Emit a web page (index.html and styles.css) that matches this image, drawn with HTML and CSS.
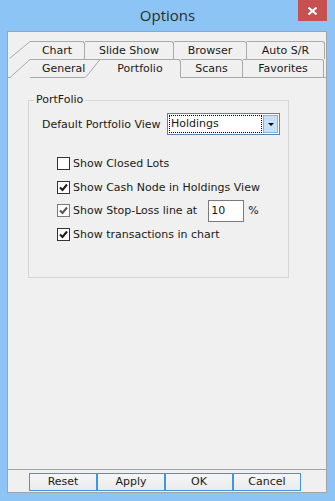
FILE: index.html
```html
<!DOCTYPE html>
<html lang="en">
<head>
  <meta charset="UTF-8">
  <title>Options</title>
  <link rel="stylesheet" href="styles.css">
</head>
<body>
<div class="frame">
  <div class="titlebar">
    <div class="title">Options</div>
    <div class="close">
      <svg width="9" height="8" viewBox="0 0 9 8"><path d="M0.5 0.5 L8.5 7.5 M8.5 0.5 L0.5 7.5" stroke="#fff" stroke-width="2" fill="none"/></svg>
    </div>
  </div>

  <div class="client">
    <!-- two rows of tabs -->
    <div class="tabstrip">
      <div class="tabrow upper">
        <svg class="slant" width="21" height="18"><path d="M0.5 17.5 L21 0.5" stroke="#a9a9a9" fill="none"/></svg>
        <div class="tab tab-chart">Chart</div>
        <div class="tab tab-slides">Slide Show</div>
        <div class="tab tab-browser">Browser</div>
        <div class="tab tab-autosr">Auto S/R</div>
      </div>
      <div class="tabrow lower">
        <svg class="slant" width="22" height="19"><path d="M0 18.5 H2.5 M2 18.5 L22 0.5" stroke="#a9a9a9" fill="none"/></svg>
        <div class="tab tab-general">General</div>
        <svg class="slant" width="15" height="19"><path d="M0 0.5 H15 M0.5 18.5 L15 0.5" stroke="#a9a9a9" fill="none"/></svg>
        <div class="tab tab-portfolio active">Portfolio</div>
        <div class="tab tab-scans">Scans</div>
        <div class="tab tab-favorites">Favorites</div>
        <div class="tab-fill"></div>
      </div>
    </div>

    <div class="page">
      <fieldset class="group">
        <legend>PortFolio</legend>
        <div class="group-body">
          <div class="field-row">
            <span class="field-label">Default Portfolio View</span>
            <div class="combo">
              <div class="combo-value">Holdings</div>
              <div class="combo-btn"><span class="arrow"></span></div>
            </div>
          </div>

          <div class="checklist">
            <div class="check-row">
              <span class="box"></span>
              <span>Show Closed Lots</span>
            </div>
            <div class="check-row">
              <span class="box"><svg width="11" height="11"><path d="M2 5.5 L4.5 8 L9 2.5" stroke="#1a1a1a" stroke-width="2" fill="none"/></svg></span>
              <span>Show Cash Node in Holdings View</span>
            </div>
            <div class="check-row">
              <span class="box dim"><svg width="11" height="11"><path d="M2 5.5 L4.5 8 L9 2.5" stroke="#555" stroke-width="2" fill="none"/></svg></span>
              <span>Show Stop-Loss line at</span>
              <div class="edit">10</div>
              <span class="pct">%</span>
            </div>
            <div class="check-row">
              <span class="box"><svg width="11" height="11"><path d="M2 5.5 L4.5 8 L9 2.5" stroke="#1a1a1a" stroke-width="2" fill="none"/></svg></span>
              <span>Show transactions in chart</span>
            </div>
          </div>
        </div>
      </fieldset>
    </div>

    <div class="buttons">
      <button class="btn">Reset</button>
      <button class="btn">Apply</button>
      <button class="btn">OK</button>
      <button class="btn">Cancel</button>
    </div>
  </div>
</div>
</body>
</html>
```

FILE: styles.css
```css
* { box-sizing: border-box; }

body {
  margin: 0;
  background: #8cc5f5;
  font-family: "DejaVu Sans", sans-serif;
  font-size: 11px;
  color: #1a1a1a;
}

.frame {
  width: 335px;
  height: 501px;
  background: #8cc5f5;
}

/* title bar */
.titlebar {
  height: 31px;
  display: grid;
  grid-template-columns: 1fr auto 1fr;
  align-items: start;
}

.title {
  grid-column: 2;
  font-family: "Open Sans", sans-serif;
  font-size: 15px;
  line-height: 30px;
  color: #2b2b2b;
}

.close {
  grid-column: 3;
  justify-self: end;
  width: 29px;
  height: 21px;
  margin-right: 8px;
  padding-top: 1px;
  background: #c75050;
  display: flex;
  align-items: center;
  justify-content: center;
}

.close svg { display: block; }

/* client area */
.client {
  margin-left: 7px;
  width: 320px;
  height: 462px;
  background: #f0f0f0;
  border: 1px solid #a3a3a3;
  display: flex;
  flex-direction: column;
}

.tabstrip { padding-top: 9px; }

.tabrow { display: flex; }
.tabrow.upper { height: 18px; margin-left: 1px; }
.tabrow.lower { height: 19px; }

.slant { display: block; flex: none; }

.tab {
  flex: none;
  border-top: 1px solid #a9a9a9;
  border-right: 1px solid #a9a9a9;
  border-top-right-radius: 3px;
  text-align: center;
  line-height: 17px;
  white-space: nowrap;
}

.lower .tab { border-bottom: 1px solid #a9a9a9; }
.lower .tab.active { border-bottom-color: transparent; }

.tab-chart { width: 55px; }
.tab-slides { width: 89px; }
.tab-browser { width: 73px; }
.tab-autosr { width: 78px; }

.tab-general {
  width: 55px;
  border-right: none;
  border-radius: 0;
  padding-left: 12px;
}
.tab-portfolio { width: 81px; }
.tab-scans { width: 62px; }
.tab-favorites { width: 81px; }

.tab-fill {
  flex: 1;
  border-bottom: 1px solid #a9a9a9;
}

/* tab page */
.page {
  flex: none;
  height: 392px;
  border-bottom: 1px solid #a3a3a3;
  padding: 15px 0 0 20px;
}

.group {
  margin: 0;
  width: 261px;
  height: 185px;
  border: 1px solid #d6d6d6;
  padding: 0;
}

.group legend {
  margin-left: 5px;
  padding: 0 2px;
  line-height: 14px;
}

.group-body { padding: 6px 0 0 13px; }

.field-row {
  display: flex;
  align-items: center;
  height: 22px;
}

.field-label { flex: 0 0 125px; }

.combo {
  width: 113px;
  height: 22px;
  border: 1px solid #5b7fae;
  background: #fff;
  padding: 1px;
  display: flex;
}

.combo-value {
  flex: 1;
  border: 1px dotted #000;
  padding-left: 1px;
  line-height: 16px;
}

.combo-btn {
  width: 15px;
  margin-left: 1px;
  background: #c7e1f9;
  border: 1px solid #7eb4ea;
  display: flex;
  align-items: center;
  justify-content: center;
}

.arrow {
  width: 0;
  height: 0;
  border-left: 3px solid transparent;
  border-right: 3px solid transparent;
  border-top: 3px solid #000;
}

.checklist {
  margin: 17px 0 0 15px;
}

.check-row {
  display: flex;
  align-items: center;
  height: 23.5px;
  gap: 3px;
}

.box {
  width: 13px;
  height: 13px;
  border: 1px solid #333;
  background: #fff;
  flex: none;
}

.box svg { display: block; }
.box.dim { border-color: #7a7a7a; }

.edit {
  width: 36px;
  height: 22px;
  margin-left: 8px;
  border: 1px solid #7a7a7a;
  background: #fff;
  padding-left: 2px;
  line-height: 20px;
}

.pct { margin-left: 1px; }

/* bottom buttons */
.buttons {
  display: flex;
  padding: 3px 0 0 21px;
}

.btn {
  width: 68px;
  height: 18px;
  margin: 0;
  padding: 0;
  border: 1px solid #3d95e6;
  background: linear-gradient(#f6f6f6, #ebebeb);
  font: inherit;
  color: #1a1a1a;
  line-height: 16px;
}
```
